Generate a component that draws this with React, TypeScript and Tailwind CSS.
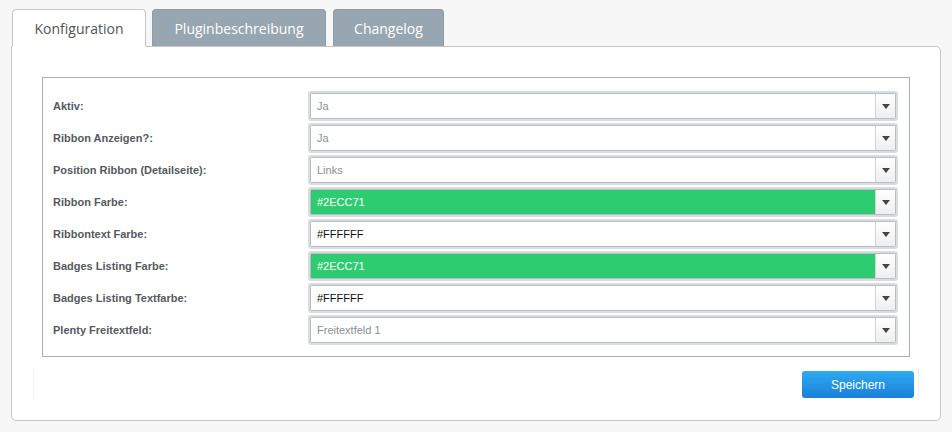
import { useState } from "react";

type Row = { label: string; value: string; kind: "muted" | "plain" | "green" };

const ROWS: Row[] = [
  { label: "Aktiv:", value: "Ja", kind: "muted" },
  { label: "Ribbon Anzeigen?:", value: "Ja", kind: "muted" },
  { label: "Position Ribbon (Detailseite):", value: "Links", kind: "muted" },
  { label: "Ribbon Farbe:", value: "#2ECC71", kind: "green" },
  { label: "Ribbontext Farbe:", value: "#FFFFFF", kind: "plain" },
  { label: "Badges Listing Farbe:", value: "#2ECC71", kind: "green" },
  { label: "Badges Listing Textfarbe:", value: "#FFFFFF", kind: "plain" },
  { label: "Plenty Freitextfeld:", value: "Freitextfeld 1", kind: "muted" },
];

const TABS = ["Konfiguration", "Pluginbeschreibung", "Changelog"];

function Field({ row }: { row: Row }) {
  const bg = row.kind === "green" ? "bg-[#2ecc71]" : "bg-white";
  const color =
    row.kind === "green" ? "text-white" : row.kind === "plain" ? "text-[#111]" : "text-[#8a8f94]";
  return (
    <div className="h-[30px] rounded-[3px] bg-[#d9dde0] p-[2px]">
      <div className="flex h-full rounded-[2px] border border-[#b8bdc2] bg-white shadow-[inset_0_1px_2px_rgba(0,0,0,0.12)]">
        <div className={`flex flex-1 items-center px-[6px] text-[11px] ${bg} ${color}`}>{row.value}</div>
        <div className="flex w-[20px] items-center justify-center border-l border-[#d0d4d7] bg-gradient-to-b from-white to-[#eeeeee]">
          <svg width="8" height="5" viewBox="0 0 8 5">
            <path d="M0 0h8L4 5z" fill="#444" />
          </svg>
        </div>
      </div>
    </div>
  );
}

export default function App() {
  const [active, setActive] = useState(0);

  return (
    <div
      className="h-[432px] w-[952px] bg-[#f7f7f7] px-[11px] pt-[9px]"
      style={{ fontFamily: "'Liberation Sans', Arial, sans-serif" }}
    >
      {/* tabs */}
      <div className="relative z-10 flex h-[37px] items-end pl-px">
        {TABS.map((t, i) => {
          const isActive = i === active;
          const w = i === 0 ? "w-[134px]" : i === 1 ? "w-[174px] ml-[6px]" : "w-[111px] ml-[7px]";
          return (
            <button
              key={t}
              onClick={() => setActive(i)}
              className={`${w} flex h-[37px] items-center justify-center rounded-t-[4px] border text-[14px] ${
                isActive
                  ? "-mb-px h-[38px] border-[#c6c6c6] border-b-white bg-white text-[#555]"
                  : "border-[#8e9ca7] border-b-0 bg-[#98a6b1] text-white"
              }`}
              style={{ fontFamily: "'Open Sans', sans-serif" }}
            >
              {t}
            </button>
          );
        })}
      </div>

      {/* panel */}
      <div className="h-[375px] rounded-b-[5px] rounded-tr-[5px] border border-[#c6c6c6] bg-white px-[30px] pt-[30px]">
        <div className="h-[280px] border border-[#a9b0b5] pb-[11px] pl-[10px] pr-[11px] pt-[12px]">
          {ROWS.map((r) => (
            <div key={r.label} className="flex h-[32px] items-center">
              <div className="w-[255px] text-[11px] font-bold text-[#555a5f]">{r.label}</div>
              <div className="flex-1">
                <Field row={r} />
              </div>
            </div>
          ))}
        </div>

        <div className="-mx-[9px] mt-[11px] flex h-[33px] items-center justify-end border-x border-[#f0f0f0] pr-[6px]">
          <button className="mr-[-2px] h-[27px] w-[112px] rounded-[3px] bg-gradient-to-b from-[#2eaaf0] to-[#1a80d9] text-[12px] text-white">
            Speichern
          </button>
        </div>
      </div>
    </div>
  );
}
